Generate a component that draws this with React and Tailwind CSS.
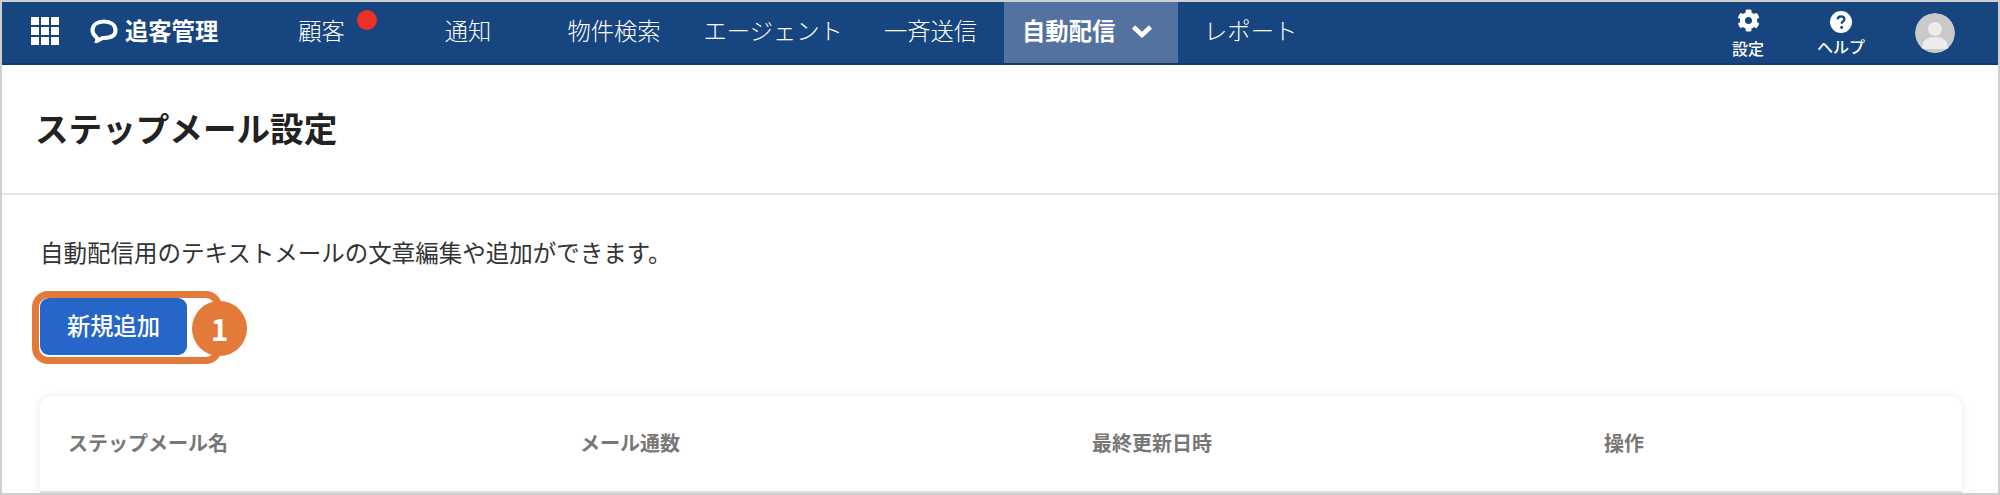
const cjk = { fontFamily: '"Noto Sans CJK JP", sans-serif' }

const navItems = [
  { label: '顧客', margin: 'ml-[80px]', dot: true },
  { label: '通知', margin: 'ml-[100px]' },
  { label: '物件検索', margin: 'ml-[76px]' },
  { label: 'エージェント', margin: 'ml-[43px]' },
  { label: '一斉送信', margin: 'ml-[41px]' },
]

const columns = ['ステップメール名', 'メール通数', '最終更新日時', '操作']

function GearIcon() {
  return (
    <svg viewBox="0 0 512 512" className="w-[23px] h-[23px]" fill="#fff">
      <path d="M487 316l-42-24c4-23 4-47 0-70l42-24c5-3 7-9 5-14-11-35-30-67-54-93-4-4-10-5-15-2l-42 24c-18-15-38-27-60-35V30c0-6-4-10-9-11-37-8-74-8-109 0-5 1-9 5-9 11v48c-22 8-42 20-60 35L92 89c-5-3-11-2-15 2-24 26-43 58-54 93-2 5 0 11 5 14l42 24c-4 23-4 47 0 70l-42 24c-5 3-7 9-5 14 11 35 30 67 54 93 4 4 10 5 15 2l42-24c18 15 38 27 60 35v48c0 6 4 10 9 11 37 8 74 8 109 0 5-1 9-5 9-11v-48c22-8 42-20 60-35l42 24c5 3 11 2 15-2 24-26 43-58 54-93 2-5 0-11-5-14zM256 336c-44 0-80-36-80-80s36-80 80-80 80 36 80 80-36 80-80 80z" />
    </svg>
  )
}

function HelpIcon() {
  return (
    <svg viewBox="0 0 24 24" className="w-[22px] h-[22px]">
      <circle cx="12" cy="12" r="12" fill="#fff" />
      <path d="M8.4 9.2c.2-2.1 1.7-3.3 3.7-3.3 2.1 0 3.6 1.2 3.6 3 0 1.3-.7 2-1.7 2.7-.9.6-1.2 1-1.2 1.9v.4" fill="none" stroke="#17457f" strokeWidth="2.5" />
      <circle cx="12.7" cy="18" r="1.6" fill="#17457f" />
    </svg>
  )
}

export default function App() {
  return (
    <div className="w-[2000px] h-[495px] overflow-hidden bg-white border-2 border-[#cfcfcf] flex flex-col" style={cjk}>

      {/* Top nav */}
      <nav className="h-[63px] -mx-[2px] shrink-0 bg-[#17457f] border-b-2 border-[#113a70] flex items-center text-white text-[23.3px] leading-none">
        <div className="ml-[31px] -mt-[3px] w-[28px] h-[28px] grid grid-cols-3 gap-[2px]">
          {Array.from({ length: 9 }).map((_, i) => (
            <span key={i} className="bg-white" />
          ))}
        </div>

        {/* Logo bubble */}
        <svg viewBox="0 0 28 24" className="ml-[31px] -mt-[3px] w-[28px] h-[24px]">
          <path d="M14 2.500c6.500 0 11.500 3.200 11.500 8.800S20.500 19 14 19h-1.500l-5.500 3c.5-1.500.3-3-.8-4C4 16.200 2.500 14 2.500 11.300 2.500 5.700 7.500 2.500 14 2.500z" fill="none" stroke="#fff" strokeWidth="4" />
        </svg>
        <span className="ml-[7px] -mt-[3px] font-bold">追客管理</span>

        {navItems.map((item) => (
          <span key={item.label} className={`${item.margin} relative -mt-[3px] font-light`}>
            {item.label}
            {item.dot && (
              <span className="absolute -top-[9px] left-[59px] w-[20px] h-[20px] rounded-full bg-[#ee3124]" />
            )}
          </span>
        ))}

        <div className="ml-[27px] w-[174px] h-full bg-[#53729f] flex items-center pl-[18px] pb-[3px]">
          <span className="font-bold">自動配信</span>
          <svg viewBox="0 0 22 14" className="ml-[16px] w-[22px] h-[14px]">
            <path d="M2.500 3l8.500 8 8.500-8" fill="none" stroke="#fff" strokeWidth="4.500" />
          </svg>
        </div>

        <span className="ml-[26px] -mt-[3px] font-light">レポート</span>

        <div className="ml-auto flex items-center">
          <div className="w-[48px] flex flex-col items-center -mt-[1px]">
            <GearIcon />
            <span className="mt-[8px] text-[16px] font-medium leading-none">設定</span>
          </div>
          <div className="ml-[45px] w-[48px] flex flex-col items-center">
            <HelpIcon />
            <span className="mt-[5px] text-[16px] font-medium leading-none">ヘルプ</span>
          </div>
          <svg viewBox="0 0 40 40" className="ml-[50px] mr-[45px] w-[40px] h-[40px] rounded-full">
            <circle cx="20" cy="20" r="20" fill="#c9c9c9" />
            <circle cx="20" cy="16" r="7" fill="#ececec" />
            <path d="M7 36c0-9 5-12 13-12s13 3 13 12z" fill="#ececec" />
          </svg>
        </div>
      </nav>

      {/* Page title */}
      <header className="h-[130px] shrink-0 border-b-2 border-[#e3e3e3] pl-[33px] flex items-center">
        <h1 className="text-[33.600px] font-bold text-[#222] leading-none -mt-[2px]">ステップメール設定</h1>
      </header>

      {/* Content */}
      <main className="pl-[38px] pr-[36px] flex-1 flex flex-col">
        <p className="mt-[46px] text-[23.500px] leading-none text-[#333]">
          自動配信用のテキストメールの文章編集や追加ができます。
        </p>

        <div className="relative mt-[33px] w-[147px] h-[57px] shrink-0">
          <button className="w-full h-full rounded-[9px] bg-[#2566c8] text-white text-[23.3px] font-medium leading-none">
            新規追加
          </button>
          <span className="absolute -left-[8px] -top-[7px] w-[190px] h-[73px] rounded-[16px] border-[7px] border-[#e47a3a]" />
          <span className="absolute left-[152px] top-[3px] w-[55px] h-[55px] rounded-full bg-[#e47a3a] text-white text-[30px] font-bold leading-none flex items-center justify-center">
            1
          </span>
        </div>

        <div className="mt-[41px] h-[97px] shrink-0 w-[1922px] rounded-t-[12px] bg-white border-b-2 border-[#dedede] shadow-[0_0_8px_rgba(0,0,0,0.09)] grid grid-cols-[512px_512px_512px_1fr] items-center pl-[28px]">
          {columns.map((col) => (
            <span key={col} className="text-[20px] font-bold text-[#777] leading-none">{col}</span>
          ))}
        </div>
      </main>
    </div>
  )
}
